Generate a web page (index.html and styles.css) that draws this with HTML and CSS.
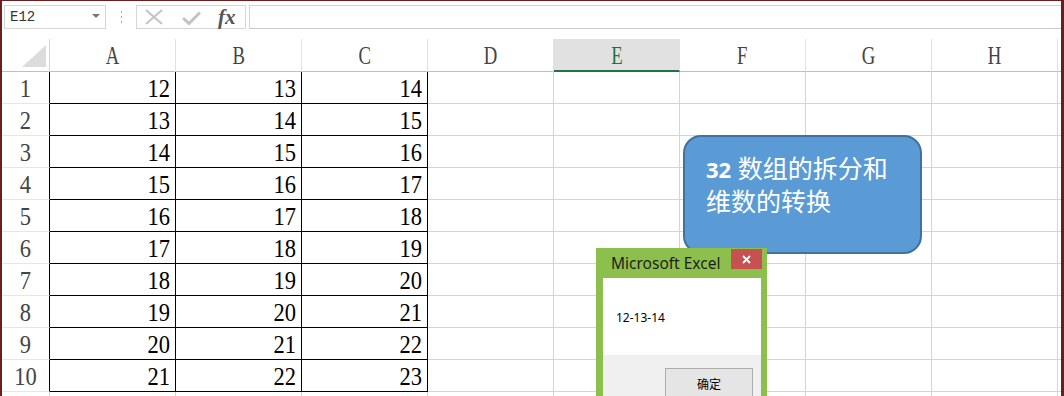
FILE: index.html
```html
<!DOCTYPE html>
<html lang="zh-CN">
<head>
<meta charset="utf-8">
<title>Excel</title>
<link rel="stylesheet" href="styles.css">
</head>
<body>
<div class="app">
  <div class="fbar">
    <div class="namebox"><span class="nb-text">E12</span><span class="nb-arrow"></span></div>
    <div class="sep">
      <svg width="3" height="12" viewBox="0 0 3 12"><rect x="1" y="0" width="1" height="2" fill="#a8a8a8"/><rect x="1" y="5" width="1" height="2" fill="#a8a8a8"/><rect x="1" y="10" width="1" height="2" fill="#a8a8a8"/></svg>
    </div>
    <div class="fxbox">
      <svg class="ico-x" width="18" height="16" viewBox="0 0 18 16"><path d="M1 1 L17 15 M17 1 L1 15" stroke="#c3c3c3" stroke-width="2" fill="none"/></svg>
      <svg class="ico-ok" width="19" height="14" viewBox="0 0 19 14"><path d="M1 7 L7 12.5 L18 1.5" stroke="#c3c3c3" stroke-width="3" fill="none"/></svg>
      <span class="fx">fx</span>
    </div>
    <div class="finput"></div>
  </div>

  <div class="grid">
    <div class="c hd corner"><svg width="47" height="32" viewBox="0 0 47 32"><polygon points="20,28 44,6 44,28" fill="#dcdcdc"/></svg></div>
    <div class="c hd"><span class="l">A</span></div>
    <div class="c hd"><span class="l">B</span></div>
    <div class="c hd"><span class="l">C</span></div>
    <div class="c hd"><span class="l">D</span></div>
    <div class="c hd sel"><span class="l">E</span></div>
    <div class="c hd"><span class="l">F</span></div>
    <div class="c hd"><span class="l">G</span></div>
    <div class="c hd"><span class="l">H</span></div>
    <div class="c hd fill"></div>

    <div class="c rh tl"><span class="n">1</span></div><div class="c t"><span class="n">12</span></div><div class="c t"><span class="n">13</span></div><div class="c t"><span class="n">14</span></div><div class="c"></div><div class="c"></div><div class="c"></div><div class="c"></div><div class="c"></div><div class="c fill"></div>
    <div class="c rh tl"><span class="n">2</span></div><div class="c t"><span class="n">13</span></div><div class="c t"><span class="n">14</span></div><div class="c t"><span class="n">15</span></div><div class="c"></div><div class="c"></div><div class="c"></div><div class="c"></div><div class="c"></div><div class="c fill"></div>
    <div class="c rh tl"><span class="n">3</span></div><div class="c t"><span class="n">14</span></div><div class="c t"><span class="n">15</span></div><div class="c t"><span class="n">16</span></div><div class="c"></div><div class="c"></div><div class="c"></div><div class="c"></div><div class="c"></div><div class="c fill"></div>
    <div class="c rh tl"><span class="n">4</span></div><div class="c t"><span class="n">15</span></div><div class="c t"><span class="n">16</span></div><div class="c t"><span class="n">17</span></div><div class="c"></div><div class="c"></div><div class="c"></div><div class="c"></div><div class="c"></div><div class="c fill"></div>
    <div class="c rh tl"><span class="n">5</span></div><div class="c t"><span class="n">16</span></div><div class="c t"><span class="n">17</span></div><div class="c t"><span class="n">18</span></div><div class="c"></div><div class="c"></div><div class="c"></div><div class="c"></div><div class="c"></div><div class="c fill"></div>
    <div class="c rh tl"><span class="n">6</span></div><div class="c t"><span class="n">17</span></div><div class="c t"><span class="n">18</span></div><div class="c t"><span class="n">19</span></div><div class="c"></div><div class="c"></div><div class="c"></div><div class="c"></div><div class="c"></div><div class="c fill"></div>
    <div class="c rh tl"><span class="n">7</span></div><div class="c t"><span class="n">18</span></div><div class="c t"><span class="n">19</span></div><div class="c t"><span class="n">20</span></div><div class="c"></div><div class="c"></div><div class="c"></div><div class="c"></div><div class="c"></div><div class="c fill"></div>
    <div class="c rh tl"><span class="n">8</span></div><div class="c t"><span class="n">19</span></div><div class="c t"><span class="n">20</span></div><div class="c t"><span class="n">21</span></div><div class="c"></div><div class="c"></div><div class="c"></div><div class="c"></div><div class="c"></div><div class="c fill"></div>
    <div class="c rh tl"><span class="n">9</span></div><div class="c t"><span class="n">20</span></div><div class="c t"><span class="n">21</span></div><div class="c t"><span class="n">22</span></div><div class="c"></div><div class="c"></div><div class="c"></div><div class="c"></div><div class="c"></div><div class="c fill"></div>
    <div class="c rh tl"><span class="n">10</span></div><div class="c t"><span class="n">21</span></div><div class="c t"><span class="n">22</span></div><div class="c t"><span class="n">23</span></div><div class="c"></div><div class="c"></div><div class="c"></div><div class="c"></div><div class="c"></div><div class="c fill"></div>
    <div class="c rh"></div><div class="c"></div><div class="c"></div><div class="c"></div><div class="c"></div><div class="c"></div><div class="c"></div><div class="c"></div><div class="c"></div><div class="c fill"></div>
  </div>

  <div class="callout"><span class="num">32</span> 数组的拆分和<br>维数的转换</div>

  <div class="dialog">
    <div class="dlg-title">
      <span class="dlg-caption">Microsoft Excel</span>
      <span class="dlg-close"><svg width="9" height="9" viewBox="0 0 9 9"><path d="M1 1 L8 8 M8 1 L1 8" stroke="#ffffff" stroke-width="1.8" fill="none"/></svg></span>
    </div>
    <div class="dlg-body">12-13-14</div>
    <div class="dlg-foot"><span class="btn">确定</span></div>
  </div>
</div>
</body>
</html>
```

FILE: styles.css
```css
html, body {
  margin: 0;
  padding: 0;
  background: #ffffff;
}

.app {
  position: relative;
  width: 1064px;
  height: 396px;
  box-sizing: border-box;
  border-top: 1px solid #6b1e1e;
  border-left: 2px solid #6b1e1e;
  border-right: 3px solid #6b1e1e;
  overflow: hidden;
  background: #ffffff;
}

/* formula bar */
.fbar {
  display: flex;
  align-items: flex-start;
  height: 38px;
  padding-top: 4px;
  box-sizing: border-box;
}

.namebox {
  margin-left: 2px;
  width: 102px;
  height: 24px;
  box-sizing: border-box;
  border: 1px solid #d5d5d5;
  display: flex;
  align-items: center;
  justify-content: space-between;
  padding: 0 5px 0 5px;
}

.nb-text {
  font-family: "Liberation Mono", monospace;
  font-size: 14px;
  color: #333333;
}

.nb-arrow {
  width: 0;
  height: 0;
  border-left: 4px solid transparent;
  border-right: 4px solid transparent;
  border-top: 4px solid #777777;
  margin-top: -2px;
}

.sep {
  width: 30px;
  height: 24px;
  display: flex;
  align-items: center;
  justify-content: center;
}

.sep svg {
  display: block;
}

.fxbox {
  width: 110px;
  height: 24px;
  box-sizing: border-box;
  border: 1px solid #d5d5d5;
  display: flex;
  align-items: center;
  padding-left: 8px;
}

.ico-x {
  display: block;
}

.ico-ok {
  display: block;
  margin-left: 19px;
  margin-top: 2px;
}

.fx {
  margin-left: 17px;
  font-family: "Liberation Serif", serif;
  font-style: italic;
  font-weight: bold;
  font-size: 21px;
  line-height: 20px;
  color: #555555;
}

.finput {
  flex: 1;
  margin-left: 3px;
  height: 24px;
  box-sizing: border-box;
  border-top: 1px solid #cdd3da;
  border-bottom: 1px solid #c8c8c8;
  border-left: 1px solid #d5d5d5;
}

/* grid */
.grid {
  display: grid;
  grid-template-columns: 48px repeat(8, 126px) 1fr;
  grid-template-rows: 33px;
  grid-auto-rows: 32px;
}

.c {
  box-sizing: border-box;
  border-right: 1px solid #d4d4d4;
  border-bottom: 1px solid #d4d4d4;
  overflow: hidden;
  white-space: nowrap;
}

.hd {
  border-right-color: #e1e1e1;
  border-bottom-color: #bfbfbf;
  text-align: center;
  font-family: "Liberation Serif", serif;
  font-size: 26px;
  line-height: 30px;
  padding-top: 2px;
  color: #444444;
}

.hd.corner {
  padding-top: 0;
  line-height: 0;
  border-right-color: #d4d4d4;
}

.hd.sel {
  background: #e1e1e1;
  color: #217346;
  border-bottom: 2px solid #217346;
}

.hd.fill,
.c.fill {
  border-right: none;
}

.l {
  display: inline-block;
  transform: scaleX(0.72);
}

.rh,
.t {
  font-family: "Liberation Serif", serif;
  font-size: 25px;
  line-height: 28px;
  padding-top: 3px;
}

.rh {
  text-align: center;
  color: #444444;
  border-bottom-color: #e6e6e6;
}

.rh.tl {
  border-right-color: #000000;
}

.t {
  text-align: right;
  padding-right: 5px;
  color: #000000;
  border-right-color: #000000;
  border-bottom-color: #000000;
}

.n {
  display: inline-block;
  transform: scaleX(0.9);
  transform-origin: right center;
}

.rh .n {
  transform-origin: center center;
}

/* callout shape */
.callout {
  position: absolute;
  left: 681px;
  top: 134px;
  width: 239px;
  height: 119px;
  box-sizing: border-box;
  background: #5b9bd5;
  border: 2px solid #41719c;
  border-radius: 18px;
  padding: 15px 10px 0 21px;
  color: #ffffff;
  font-family: "Noto Sans", "Noto Sans CJK SC", sans-serif;
  font-size: 25px;
  line-height: 32px;
  white-space: nowrap;
}

.callout .num {
  font-weight: bold;
  font-size: 22px;
}

/* message box */
.dialog {
  position: absolute;
  left: 594px;
  top: 247px;
  width: 171px;
  height: 160px;
  box-sizing: border-box;
  background: #8dbf4d;
  padding: 0 6px 0 7px;
  display: flex;
  flex-direction: column;
}

.dlg-title {
  height: 30px;
  flex: none;
  display: flex;
  justify-content: space-between;
  align-items: flex-start;
  padding-left: 8px;
  box-sizing: border-box;
}

.dlg-caption {
  font-family: "Noto Sans", sans-serif;
  font-size: 15.5px;
  line-height: 20px;
  color: #1e1e1e;
  margin-top: 5px;
  white-space: nowrap;
}

.dlg-close {
  width: 31px;
  height: 20px;
  margin-top: 1px;
  margin-right: -1px;
  background: #c75050;
  display: flex;
  align-items: center;
  justify-content: center;
  flex: none;
}

.dlg-close svg {
  display: block;
}

.dlg-body {
  height: 77px;
  flex: none;
  box-sizing: border-box;
  background: #ffffff;
  padding: 32px 0 0 13px;
  font-family: "Noto Sans", sans-serif;
  font-size: 12px;
  line-height: 16px;
  color: #000000;
}

.dlg-foot {
  flex: 1;
  background: #f0f0f0;
  display: flex;
  justify-content: flex-end;
  align-items: flex-start;
  padding: 13px 8px 0 0;
}

.btn {
  width: 88px;
  height: 30px;
  box-sizing: border-box;
  border: 1px solid #adadad;
  background: #e5e5e5;
  display: flex;
  align-items: center;
  justify-content: center;
  font-family: "Noto Sans CJK SC", sans-serif;
  font-size: 12px;
  color: #000000;
}
```
